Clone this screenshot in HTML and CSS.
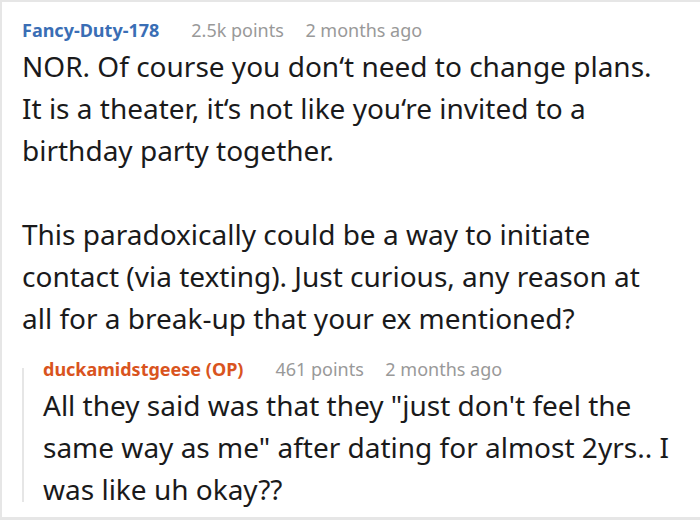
FILE: index.html
```html
<!DOCTYPE html>
<html lang="en">
<head>
<meta charset="utf-8">
<title>Comment thread</title>
<link rel="stylesheet" href="styles.css">
</head>
<body>
<div class="thread">
  <div class="comment">
    <div class="meta">
      <span class="author">Fancy-Duty-178</span>
      <span class="info">2.5k points</span>
      <span class="info">2 months ago</span>
    </div>
    <div class="body">
      <p>NOR. Of course you don‘t need to change plans. It is a theater, it‘s not like you‘re invited to a birthday party together.</p>
      <p>This paradoxically could be a way to initiate contact (via texting). Just curious, any reason at all for a break-up that your ex mentioned?</p>
    </div>
  </div>
  <div class="reply">
    <div class="thread-line"></div>
    <div class="comment">
      <div class="meta">
        <span class="author op">duckamidstgeese (OP)</span>
        <span class="info">461 points</span>
        <span class="info">2 months ago</span>
      </div>
      <div class="body">
        <p>All they said was that they "just don't feel the same way as me" after dating for almost 2yrs.. I was like uh okay??</p>
      </div>
    </div>
  </div>
</div>
</body>
</html>
```

FILE: styles.css
```css
html, body {
  margin: 0;
  padding: 0;
  background: #ffffff;
}

body {
  font-family: "Noto Sans", "Open Sans", sans-serif;
  color: #1a1a1b;
}

.thread {
  box-sizing: border-box;
  width: 700px;
  height: 520px;
  border-top: 2px solid #e6e6e6;
  border-left: 2px solid #e6e6e6;
  border-bottom: 3px solid #e6e6e6;
  padding: 16px 31px 0 20px;
}

.meta {
  display: flex;
  align-items: baseline;
  gap: 21.5px;
  font-size: 18px;
  line-height: 24px;
  white-space: nowrap;
}

.author {
  font-weight: bold;
  color: #3a6eb5;
  margin-right: 10.5px;
}

.author.op {
  color: #d9541e;
}

.info {
  color: #999999;
}

.body {
  margin-top: 3px;
  font-size: 28px;
  line-height: 42px;
}

.body p {
  margin: 0 0 42px 0;
}

.body p:last-child {
  margin-bottom: 0;
}

.reply {
  display: flex;
  margin-top: 18px;
}

.thread-line {
  flex: 0 0 2px;
  background: #e6e6e6;
  margin-top: 11px;
  height: 134px;
}

.reply .comment {
  flex: 1;
  padding-left: 19px;
}
```
